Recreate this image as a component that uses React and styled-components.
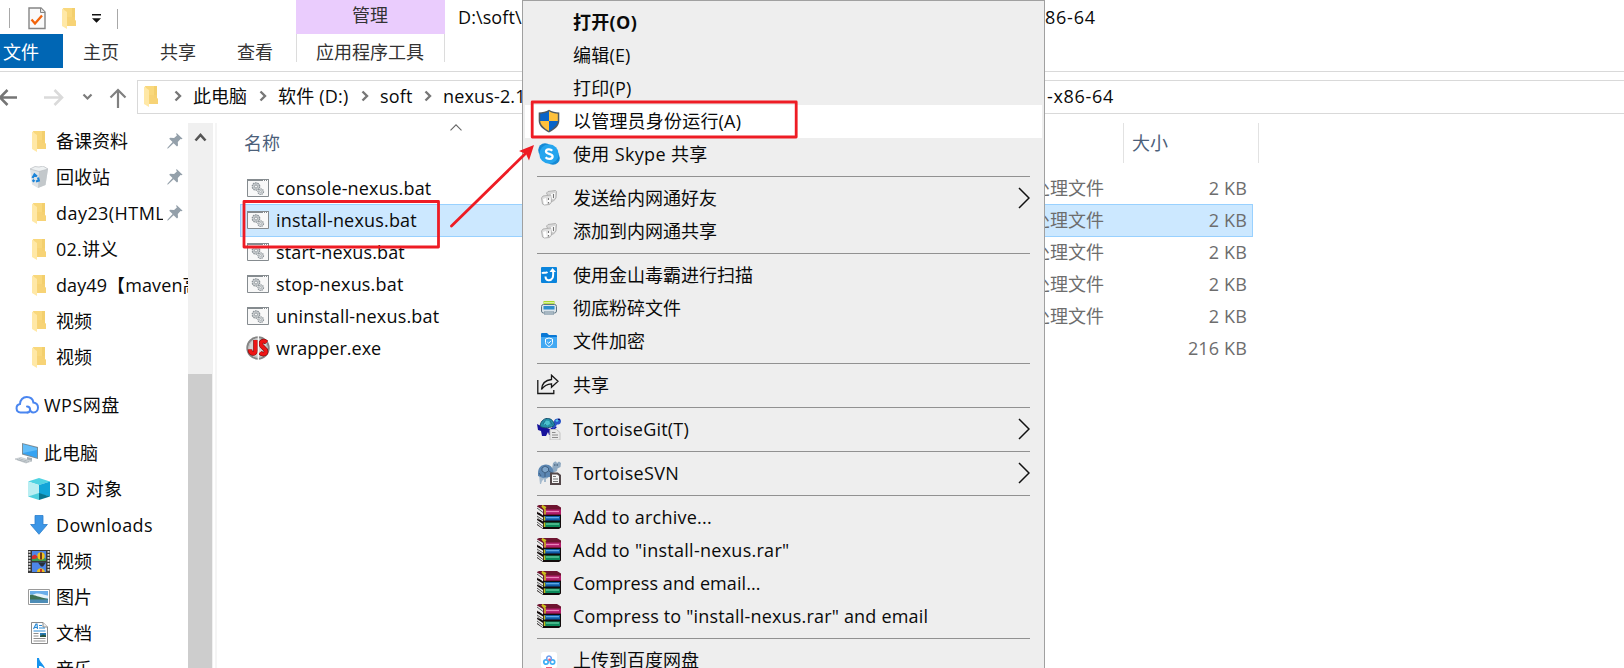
import React from "react";
import styled, { createGlobalStyle } from "styled-components";

const GlobalStyle = createGlobalStyle`
  html, body { margin: 0; padding: 0; background: #fff; overflow: hidden; }
  * { box-sizing: border-box; }
  svg { display: block; flex: none; }
`;

const Window = styled.div`
  position: relative;
  width: 1624px;
  height: 668px;
  overflow: hidden;
  display: flex;
  flex-direction: column;
  background: #fff;
  color: #0a0a0a;
  font-family: "Open Sans", "Noto Sans CJK SC", sans-serif;
  font-size: 18px;
  line-height: 24px;
  white-space: nowrap;
`;

const Label = styled.span`
  letter-spacing: ${(p) => p.$ls || 0}px;
  font-weight: ${(p) => (p.$bold ? 700 : 400)};
`;

/* ---------- title bar and ribbon ---------- */
const TitleBar = styled.header`
  display: flex;
  height: 34px;
`;
const QuickAccess = styled.div`
  display: flex;
  align-items: center;
  width: 296px;
  padding-left: 9px;
`;
const QuickDivider = styled.i`
  width: 1px;
  height: 20px;
  margin-top: 2px;
  background: #a8a8a8;
`;
const QuickIcon = styled.span`
  margin-left: ${(p) => p.$gap}px;
  padding-top: 2px;
`;
const ContextTab = styled.div`
  display: flex;
  justify-content: center;
  align-items: center;
  width: 149px;
  padding: 0 1px 5px 0;
  background: #eaccfd;
  color: #333;
`;
const TitleText = styled.div`
  width: 600px;
  padding: 5px 0 0 13px;
  letter-spacing: 0.1px;
`;
const TitleTail = styled.div`
  padding-top: 5px;
  letter-spacing: 0.75px;
`;
const Ribbon = styled.nav`
  display: flex;
  height: 38px;
  border-bottom: 1px solid #d9d9d9;
  color: #333;
`;
const Tab = styled.div`
  width: ${(p) => p.$w}px;
  height: 34px;
  padding: 6px 0 0 ${(p) => p.$pad}px;
  background: ${(p) => (p.$file ? "#0066b4" : "transparent")};
  color: ${(p) => (p.$file ? "#fff" : "#333")};
`;
const ToolTab = styled.div`
  width: 149px;
  height: 28px;
  padding: 6px 0 0 19px;
  border-left: 1px solid #dcdcdc;
  border-right: 1px solid #dcdcdc;
`;

/* ---------- address bar ---------- */
const AddressRow = styled.div`
  display: flex;
  height: 51px;
  padding-top: 8px;
`;
const NavButtons = styled.div`
  display: flex;
  width: 137px;
  height: 34px;
`;
const AddressBox = styled.div`
  display: flex;
  align-items: center;
  flex: 1;
  height: 34px;
  border: 1px solid #d9d9d9;
  border-right: 0;
  padding: 0 0 2px 6px;
`;
const Crumb = styled.span`
  flex: none;
  width: ${(p) => p.$w}px;
  padding-left: ${(p) => p.$pad || 0}px;
  letter-spacing: ${(p) => p.$ls || 0}px;
`;
const CrumbTail = styled.span`
  width: 482px;
  text-align: right;
  letter-spacing: 0.7px;
`;

/* ---------- body ---------- */
const Body = styled.div`
  display: flex;
  flex: 1;
  min-height: 0;
`;
const Sidebar = styled.aside`
  width: 188px;
  overflow: hidden;
`;
const SideItem = styled.div`
  display: flex;
  align-items: center;
  width: 188px;
  height: 36px;
  margin-top: ${(p) => p.$gap || 0}px;
  padding-left: ${(p) => (p.$root ? 14 : 26)}px;
`;
const SideIcon = styled.span`
  display: flex;
  justify-content: center;
  width: 26px;
`;
const SideLabel = styled.span`
  flex: 1;
  min-width: 0;
  overflow: hidden;
  margin-left: 4px;
`;
const PinSlot = styled.span`
  width: 25px;
  padding-left: 4px;
`;
const Scrollbar = styled.div`
  width: 25px;
  background: #f0f0f0;
`;
const ScrollUp = styled.div`
  display: flex;
  justify-content: center;
  height: 251px;
  padding-top: 9px;
`;
const ScrollThumb = styled.div`
  width: 24px;
  height: 294px;
  background: #cdcdcd;
`;
const Splitter = styled.div`
  width: 4px;
  border-right: 2px solid #f5f5f5;
`;
const FileList = styled.main`
  flex: 1;
  padding-left: 23px;
`;
const Columns = styled.div`
  display: flex;
  height: 49px;
  color: #4c607a;
`;
const Column = styled.div`
  width: ${(p) => p.$w}px;
  height: 40px;
  padding: 8px 0 0 ${(p) => p.$pad}px;
  border-right: 1px solid #e2e2e2;
  display: flex;
`;
const SortMark = styled.span`
  margin: -7px 0 0 170px;
`;
const FileRow = styled.div`
  display: flex;
  align-items: center;
  width: 1013px;
  height: ${(p) => (p.$selected ? 33 : 32)}px;
  margin-bottom: ${(p) => (p.$selected ? -1 : 0)}px;
  padding: 0 5px ${(p) => (p.$selected ? 1 : 0)}px 6px;
  border: 1px solid ${(p) => (p.$selected ? "#99d1ff" : "transparent")};
  background: ${(p) => (p.$selected ? "#cce8ff" : "transparent")};
`;
const FileIcon = styled.span`
  display: flex;
  justify-content: center;
  width: 22px;
  margin-right: 7px;
`;
const FileName = styled.span`
  width: 500px;
`;
const FileType = styled.span`
  width: 328px;
  text-align: right;
  color: #6d6d6d;
`;
const FileSize = styled.span`
  flex: 1;
  text-align: right;
  color: #6d6d6d;
`;

/* ---------- context menu ---------- */
const Menu = styled.div`
  position: absolute;
  left: 522px;
  top: 0;
  width: 523px;
  height: 690px;
  padding: 5px 2px;
  border: 1px solid #a0a0a0;
  background: #eee;
`;
const MenuItem = styled.div`
  display: flex;
  align-items: center;
  height: 33px;
  padding: 0 12px 2px 0;
  background: ${(p) => (p.$active ? "#fff" : "transparent")};
`;
const MenuIcon = styled.span`
  display: flex;
  justify-content: center;
  width: 48px;
`;
const MenuLabel = styled.span`
  flex: 1;
`;
const MenuRule = styled.hr`
  height: 1px;
  margin: 5px 12px;
  border: 0;
  background: #919191;
`;
const Annotations = styled.svg`
  position: absolute;
  left: 0;
  top: 0;
`;

/* ---------- icons ---------- */
const Folder = () => (
  <svg width="14" height="21" viewBox="0 0 14 21">
    <path d="M1 0h12v12l1 1v5H4z" fill="#f9d87c" />
    <path d="M10 0h3v12h-3z" fill="#f3cf6d" />
    <path d="M0 0.5l5 3.500v17L0 18z" fill="#ffe8a6" />
    <path d="M5 9l.4 9H14v-5l-1-1V9z" fill="#f6d273" opacity=".7" />
  </svg>
);
const Recycle = () => (
  <svg width="20" height="22" viewBox="0 0 20 22">
    <path d="M1 3l9 2 9-2-2.500 16-7.500 3-6-3.500z" fill="#dfe3e6" />
    <path d="M10 5l9-2-2.500 16-7.500 3z" fill="#c3c8cb" />
    <path d="M1 3l5-2.500 4 .5 4-1 5 3-9 2.500z" fill="#eef1f2" stroke="#b7bcc0" strokeWidth=".7" />
    <path d="M3.500 12l2-3.500 2.500 2M9 11.500l.8 3-2.800 1M5.500 15.500l-2-1.500" fill="none" stroke="#1c84d8" strokeWidth="2.200" />
  </svg>
);
const Pin = () => (
  <svg width="16" height="16" viewBox="0 0 16 16">
    <path d="M9.600 0l6 5.800-1.300.4-.8-.3-2.700 3 .2 3.700-1 1L6.600 10.300 1 15.600l-.8-.2.4-.9 5-5.500-3.400-3.200 1-1 3.900.2L9.900 2.400 9.200 1z" fill="#94a0aa" />
  </svg>
);
const Cloud = () => (
  <svg width="24" height="20" viewBox="0 0 24 20" fill="none" stroke="#4a86f0" strokeWidth="2" strokeLinecap="round">
    <path d="M12.500 17.500H5.500A4.300 4.300 0 0 1 5 9C5 5 8 2 11.700 2c3.500 0 6.200 2.300 6.700 5.500 2.600.4 4.600 2.500 4.600 5 0 2.800-2 5-4.700 5-1.800 0-3.300-1.400-3.300-3.200 0-1.700-1.200-2.800-3-2.800" />
    <path d="M12.500 17.500c1.500 0 2.500-1.200 2.500-3" />
  </svg>
);
const Computer = () => (
  <svg width="24" height="21" viewBox="0 0 24 21">
    <path d="M7 0l16 4v12L7 11.500z" fill="#7b8e99" />
    <path d="M8 1.300L22 5v9.700L8 10.600z" fill="#35a3f2" />
    <path d="M8 1.300L22 5v2L8 10z" fill="#63bdf8" />
    <path d="M12 14l5 1v3l-5-1z" fill="#a7b0b6" />
    <path d="M0 16l6-1.500 11 3.500-6 2z" fill="#dce1e4" stroke="#aeb6bb" strokeWidth=".6" />
    <path d="M2 16.500l10 2.800M4 15.700l10 2.800" stroke="#9aa3a9" strokeWidth=".7" />
  </svg>
);
const Cube = () => (
  <svg width="22" height="22" viewBox="0 0 22 22">
    <path d="M0 3.500L11 0l11 3.500L11 7z" fill="#4fd3e2" />
    <path d="M0 3.500L11 7v9L0 18.500z" fill="#b9eef2" />
    <path d="M22 3.500L11 7v9l11 2.500z" fill="#12a5d8" />
    <path d="M0 18.500L11 15v7z" fill="#4fcfdd" />
    <path d="M22 18.500L11 15v7z" fill="#087691" />
  </svg>
);
const Download = () => (
  <svg width="18" height="20" viewBox="0 0 18 20">
    <path d="M5 .5h8v9h4.400L9 19.300.6 9.500H5z" fill="#3c96e6" stroke="#2b7fcb" strokeWidth=".8" />
  </svg>
);
const Film = () => (
  <svg width="22" height="23" viewBox="0 0 22 23">
    <path d="M0 0h22v23H0z" fill="#3a3a3a" />
    <path d="M1.500 1v21M20.500 1v21" stroke="#ddd" strokeWidth="2" strokeDasharray="1.800 1.200" />
    <path d="M4 1h14v10H4zM4 12.500h14V22H4z" fill="#4d86e8" />
    <path d="M4 8l5-1 9 1.500V11H4z" fill="#3c9a50" />
    <circle cx="13" cy="6" r="3.700" fill="#f1c21c" />
    <path d="M12 2.500h2v7h-2z" fill="#6d3b1c" />
    <path d="M4 6l3-1.500L10 7 7 9H4z" fill="#d6322e" />
    <path d="M10 12.500h8l-3 4h-2z" fill="#27303c" />
    <path d="M9 22c0-5 7-5 8 0z" fill="#e8bd20" />
    <path d="M12 19h2v3h-2z" fill="#c5382d" />
  </svg>
);
const Picture = () => (
  <svg width="22" height="16" viewBox="0 0 22 16">
    <path d="M.5.500h21v15H.5z" fill="#fff" stroke="#9a9a9a" />
    <path d="M2 2h18v12H2z" fill="#9bcdf2" />
    <path d="M8 6h12V2H2v3z" fill="#6aaeea" />
    <path d="M5 6c4-3 9-1 15 1v2H2z" fill="#e5f2fa" />
    <path d="M2 6c3-1 7 2 18 4v1H2z" fill="#3f7256" />
    <path d="M2 10.500h18V14H2z" fill="#4d8cb6" />
  </svg>
);
const Doc = () => (
  <svg width="17" height="22" viewBox="0 0 17 22">
    <path d="M.5.500h11.500l4.500 4.500v16.500H.5z" fill="#fff" stroke="#8b8b8b" />
    <path d="M12 .5V5h4.500" fill="#ececec" stroke="#8b8b8b" />
    <path d="M2.500 7l2.500-5h1l.5 5M3.500 5.500h3M8 3.500h3M8 6h6M2.500 9h12" fill="none" stroke="#2c8bd6" strokeWidth="1.200" />
    <path d="M2.500 11.500h5M2.500 14h5M2.500 16.500h12M2.500 19h12" stroke="#8e8e8e" />
    <path d="M9 11h6v4H9z" fill="#2879b2" />
    <path d="M9 14l3-1.500 3 1V15H9z" fill="#285640" />
  </svg>
);
const Note = () => (
  <svg width="18" height="22" viewBox="0 0 18 22">
    <path d="M7 0h2c.5 5 7 7 6 13-1-4-3-5-6-5v10c0 4-8 5-8 1 0-3 3-4 6-3.500z" fill="#1593ee" />
  </svg>
);
const CheckDoc = () => (
  <svg width="18" height="23" viewBox="0 0 18 23">
    <path d="M1 1h12l4 4v16.500H1z" fill="#fafafa" stroke="#858585" strokeWidth="1.400" />
    <path d="M12.500 1v4.500H17" fill="#e5e5e5" stroke="#858585" />
    <path d="M3.500 12.500l3.500 4L14 8.500" fill="none" stroke="#f2640c" strokeWidth="2.300" />
  </svg>
);
const DropMark = () => (
  <svg width="9" height="9" viewBox="0 0 9 9">
    <path d="M0 0h9v1.600H0zM0 4.200h9L4.500 8.700z" fill="#111" />
  </svg>
);
const NavArrows = () => (
  <svg width="137" height="34" viewBox="0 0 137 34" fill="none" strokeWidth="2.600">
    <path d="M17 17.500H0M7.500 10L0 17.500 7.500 25" stroke="#757575" />
    <path d="M44 17.500h18M54.500 10l7.500 7.500-7.500 7.500" stroke="#dadada" />
    <path d="M83.500 14.500l4 4 4-4" stroke="#7c7c7c" strokeWidth="2.200" />
    <path d="M118 28V10M110.500 17.500l7.500-7.500 7.500 7.500" stroke="#808080" strokeWidth="2.200" />
  </svg>
);
const Chevron = () => (
  <svg width="8" height="12" viewBox="0 0 8 12">
    <path d="M1.500 1.500L6 6l-4.500 4.500" fill="none" stroke="#777" strokeWidth="2.400" />
  </svg>
);
const UpChevron = () => (
  <svg width="13" height="11" viewBox="0 0 13 11">
    <path d="M1.500 8.500l5-5.500 5 5.500" fill="none" stroke="#555" strokeWidth="2.600" />
  </svg>
);
const SortCaret = () => (
  <svg width="12" height="7" viewBox="0 0 12 7">
    <path d="M.5 6.300L6 .8l5.500 5.500" fill="none" stroke="#666" strokeWidth="1.100" />
  </svg>
);
const Bat = () => (
  <svg width="22" height="18" viewBox="0 0 22 18">
    <path d="M.5.500h21v17H.5z" fill="#f8f8f8" stroke="#858b8f" />
    <path d="M0 0h22v2H0z" fill="#858b8f" />
    <path d="M16 1.500h1M18 1.500h1M20 1.500h1" stroke="#fff" />
    <circle cx="9" cy="7.500" r="3.700" fill="#c9cdcf" stroke="#8c9398" strokeWidth="1.300" strokeDasharray="1.500 .8" />
    <circle cx="9" cy="7.500" r="1.500" fill="#f4f4f4" stroke="#8c9398" strokeWidth=".8" />
    <circle cx="13.700" cy="12.700" r="2.800" fill="#d7dadc" stroke="#8c9398" strokeWidth="1.200" strokeDasharray="1.300 .8" />
    <circle cx="13.700" cy="12.700" r="1" fill="#fff" stroke="#8c9398" strokeWidth=".6" />
  </svg>
);
const JsExe = () => (
  <svg width="24" height="24" viewBox="0 0 24 24">
    <circle cx="12" cy="12" r="10.700" fill="#f3f3f3" stroke="#858585" strokeWidth="2" />
    <circle cx="12" cy="12" r="9.300" fill="#d5d5d5" stroke="#b5b5b5" />
    <path d="M4 13.500c0 4.500 5.500 5.500 5.500 1V4M20.500 6.500C18 4 14.500 5 15 8.500c.3 3 5 3.500 5 7 0 3-4 3.500-6 1" fill="none" stroke="#7b1111" strokeWidth="4.600" />
    <path d="M4 13.500c0 4.500 5.500 5.500 5.500 1V4M20.500 6.500C18 4 14.500 5 15 8.500c.3 3 5 3.500 5 7 0 3-4 3.500-6 1" fill="none" stroke="#ee1515" strokeWidth="3.400" />
    <path d="M12.300 0v24" stroke="#fff" strokeWidth="1.200" />
  </svg>
);
const Shield = () => (
  <svg width="22" height="24" viewBox="0 0 22 24">
    <path d="M11 .7c3 2 6.500 2.500 10.300 2.800v8.500c0 5-5 9-10.300 11.500C5.700 21 .7 17 .7 12V3.500C4.500 3.200 8 2.700 11 .7z" fill="#505a60" />
    <path d="M11 2.200V12H2.200V4.700C5.500 4.400 8.500 3.700 11 2.200z" fill="#0864c8" />
    <path d="M11 2.200V12h8.800V4.700C16.500 4.400 13.500 3.700 11 2.200z" fill="#ffc13b" />
    <path d="M11 12H2.200c.3 4 4.300 7.500 8.800 9.900z" fill="#ffc13b" />
    <path d="M11 12h8.800c-.3 4-4.300 7.500-8.800 9.900z" fill="#0864c8" />
  </svg>
);
const Skype = () => (
  <svg width="22" height="22" viewBox="0 0 22 22">
    <circle cx="7" cy="7" r="6.800" fill="#1689d4" />
    <circle cx="15" cy="15" r="6.800" fill="#1689d4" />
    <circle cx="11" cy="11" r="9.700" fill="#25a5ee" />
    <path d="M14.200 7.700C12.500 5.700 8 5.900 8 8.500c0 3 6.600 1.800 6.600 5 0 2.900-5 3.200-7 .8" fill="none" stroke="#fff" strokeWidth="2.300" />
  </svg>
);
const Neiwang = () => (
  <svg width="16" height="16" viewBox="0 0 16 16">
    <path d="M5.500 3l1.500-1.500 7.500-1 1 1-.5 6.500-2.500 3-3 .5z" fill="#d8d8d8" stroke="#a5a5a5" strokeWidth=".8" />
    <path d="M.5 8l1.500-2 7.500-1 1.500 1.500-.5 5.500-2 2.500-5 .5L1.500 14z" fill="#dedede" stroke="#a5a5a5" strokeWidth=".8" />
    <path d="M10 4l4-1v5l-3 1zM2 9l3-1 1 6-3 .5zM6.500 8l3-.5v5l-3 1z" fill="#fff" />
    <path d="M12.500 4v4M7.500 8v2M7.500 12v1.500" stroke="#777" strokeWidth="1.200" />
  </svg>
);
const Scan = () => (
  <svg width="16" height="16" viewBox="0 0 16 16">
    <rect width="16" height="16" rx="1" fill="#0a84dc" />
    <path d="M1 6.500C2.500 4.500 4 7 6.500 5M4.500 9.500c0 4.500 5 5 7 1.500 1-2 .8-4.500.5-7.500" fill="none" stroke="#fff" strokeWidth="2" />
    <path d="M8.500 5l3-4L15 5z" fill="#fff" />
  </svg>
);
const Shredder = () => (
  <svg width="16" height="14" viewBox="0 0 16 14">
    <path d="M2.500 0h11v4h-11z" fill="#a9d82f" />
    <path d="M3 1.700h10" stroke="#e7f8b4" />
    <rect x=".5" y="3.500" width="15" height="8.500" rx="2" fill="#dce4ea" stroke="#5e7482" />
    <path d="M2.500 5h11v3.500h-11z" fill="#2d8dcc" />
    <path d="M3.500 10h9v4h-9z" fill="#f7f7f7" />
    <path d="M4 10v4M6 10v4M8 10v4M10 10v4M12 10v4" stroke="#57778c" />
  </svg>
);
const Encrypt = () => (
  <svg width="16" height="15" viewBox="0 0 16 15">
    <path d="M0 1q0-1 1-1h5l2 2h7q1 0 1 1v3H0z" fill="#0a78d5" />
    <path d="M0 4h16v11H0z" fill="#42a8f2" />
    <path d="M8 5l3.500 1v3.500c0 2-1.700 3.200-3.500 4-1.800-.8-3.500-2-3.500-4V6z" fill="none" stroke="#fff" />
    <path d="M6.300 9l1.400 1.300 2.300-2.500" fill="none" stroke="#fff" />
  </svg>
);
const Share = () => (
  <svg width="24" height="21" viewBox="0 0 24 21" fill="none" stroke="#171717" strokeWidth="1.300">
    <path d="M.8 6v13.500h16V16" />
    <path d="M4.500 15.500C5 9 9 6 14.500 5.500V1.200l6.500 6-6.500 6V9.800C10 10 7 11.500 4.500 15.500z" />
  </svg>
);
const GitTortoise = () => (
  <svg width="24" height="22" viewBox="0 0 24 22">
    <path d="M0 6l4 2 9 3 4-3 3 1-4 4-1 4h-3l-1-3-2 4H5l-1-5-3-1z" fill="#16119b" />
    <path d="M17 3.500C17 0 24-.5 24 3c0 3-2 3.500-4 3.500L17 11l-2-1z" fill="#2b55c9" />
    <path d="M18.500 3c0-2 3-2 3.500-.5L20 4z" fill="#4fc3ea" />
    <path d="M21 1.500h2" stroke="#10106a" strokeWidth="1.300" />
    <path d="M3 8C4 2 8 0 11.500.5 15 1 17 4 17.500 7 15 10 6 11 3 8z" fill="#2591a8" stroke="#174f6e" />
    <path d="M6.500 6l2-3.500 4 .5L13 6 9.500 8z" fill="#4cc3ce" />
    <path d="M8.500 2.500L6 6M13 3l2.500 4M9.500 8L8 6" stroke="#1d6380" strokeWidth=".8" />
    <path d="M13 11.500h6.500l3.500 3V22H13z" fill="#e9e9e9" stroke="#c3c3c3" />
    <path d="M15 14.500h3.500M15 17h6M15 19.500h6" stroke="#8b8b8b" strokeWidth="1.200" />
  </svg>
);
const SvnTortoise = () => (
  <svg width="24" height="24" viewBox="0 0 24 24">
    <path d="M16 2l2-1.500h1L20 2l2-1.500L24 2l-.5 4-3 1.500L20 10l-4 2-1-4z" fill="#8fa9c1" />
    <path d="M17 4h5" stroke="#536d88" strokeWidth="1.500" strokeDasharray="1.500 1" />
    <path d="M2 14h9v3l-2 1v3H7v-3l-2 2-1 3H3z" fill="#a5bacd" />
    <path d="M1 12C1 7 4 3.500 9 3.500c4 0 7 3 7.500 7.500L13 16l-7 1-5-2z" fill="#5b86b2" />
    <path d="M5 7l3-2 3.500 2v3L8 12l-3-2zM2 12l2 3M12 10l3 2M8 12v4" fill="#7fa6cb" stroke="#3e5f82" />
    <path d="M14 12.500h6.500l2.500 2V23h-9z" fill="#f5f5f5" stroke="#54484a" strokeWidth="2" />
    <path d="M16 15.500h3M16 18h5M16 20.500h5" stroke="#777" />
  </svg>
);
const Rar = () => (
  <svg width="24" height="24" viewBox="0 0 24 24">
    <path d="M0 14l6 1h18v7.500L22 24H6L0 20z" fill="#120b0b" />
    <path d="M0 7l6 2h18v7H6L0 13z" fill="#120b0b" />
    <path d="M0 1l2-1h18l4 2.500v7H6L0 6z" fill="#6e1430" />
    <path d="M0 1.500l6 3.500v5.500L0 6z" fill="#efefef" />
    <path d="M0 9l6 3.500v4L0 12.500z" fill="#efefef" />
    <path d="M0 15l6 4v4.500L0 19z" fill="#efefef" />
    <path d="M0 3l6 4.500M0 11l6 4M0 17l6 4.500" stroke="#444" strokeWidth=".9" />
    <path d="M7 4.500h17V9.500H7z" fill="#b01c68" />
    <path d="M9 6.500h13" stroke="#ea83bb" strokeWidth="1.300" />
    <path d="M7 11h16v4.500H7z" fill="#0e5ba6" />
    <path d="M9 12.700h13" stroke="#69b4ec" strokeWidth="1.200" />
    <path d="M7 17.500h16v4.500H7z" fill="#0c8a5b" />
    <path d="M9 19h13" stroke="#66d0a4" strokeWidth="1.300" />
    <path d="M5 1l3 3.500v5M7.500 11.500v4M7.500 17.500v4.500" fill="none" stroke="#c9bf1d" strokeWidth="1.500" />
    <path d="M5 .8l4 2" stroke="#c9bf1d" strokeWidth="2" />
  </svg>
);
const Baidu = () => (
  <svg width="16" height="16" viewBox="0 0 16 16">
    <rect width="16" height="16" rx="2.500" fill="#fff" />
    <circle cx="5" cy="10" r="2.200" fill="none" stroke="#3fb0f5" strokeWidth="1.700" />
    <circle cx="11.500" cy="10" r="2.200" fill="none" stroke="#3fb0f5" strokeWidth="1.700" />
    <path d="M6 7.500a2.300 2.300 0 1 1 4 0L8.500 9.500" fill="none" stroke="#6c9df0" strokeWidth="1.600" />
    <circle cx="8.500" cy="7.800" r="1.300" fill="#ef5c73" />
    <path d="M5 15.500h6" stroke="#ef5c73" />
  </svg>
);
const SubArrow = () => (
  <svg width="12" height="22" viewBox="0 0 12 22">
    <path d="M1 1l10 10L1 21" fill="none" stroke="#111" strokeWidth="1.500" />
  </svg>
);

const sideItems = [
  { icon: Folder, text: "备课资料", pin: true },
  { icon: Recycle, text: "回收站", pin: true },
  { icon: Folder, text: "day23(HTML", pin: true, ls: 0.45 },
  { icon: Folder, text: "02.讲义", ls: 0.2 },
  { icon: Folder, text: "day49【maven高级】", ls: 0.1 },
  { icon: Folder, text: "视频" },
  { icon: Folder, text: "视频" },
  { icon: Cloud, text: "WPS网盘", root: true, gap: 12, ls: 0.5 },
  { icon: Computer, text: "此电脑", root: true, gap: 12 },
  { icon: Cube, text: "3D 对象", ls: 0.55 },
  { icon: Download, text: "Downloads", ls: 0.33 },
  { icon: Film, text: "视频" },
  { icon: Picture, text: "图片" },
  { icon: Doc, text: "文档" },
  { icon: Note, text: "音乐" },
];

const files = [
  { name: "console-nexus.bat", size: "2 KB", ls: 0.16 },
  { name: "install-nexus.bat", size: "2 KB", ls: 0.18 },
  { name: "start-nexus.bat", size: "2 KB", ls: 0.13 },
  { name: "stop-nexus.bat", size: "2 KB", ls: 0.18 },
  { name: "uninstall-nexus.bat", size: "2 KB", ls: 0.18 },
  { name: "wrapper.exe", size: "216 KB" },
];

const menuItems = [
  { text: "打开(O)", bold: true, ls: 0.3 },
  { text: "编辑(E)", ls: 0.2 },
  { text: "打印(P)", ls: 0.2 },
  { text: "以管理员身份运行(A)", icon: Shield, active: true, ls: 0.2 },
  { text: "使用 Skype 共享", icon: Skype, ls: 0.35 },
  null,
  { text: "发送给内网通好友", icon: Neiwang, sub: true },
  { text: "添加到内网通共享", icon: Neiwang },
  null,
  { text: "使用金山毒霸进行扫描", icon: Scan },
  { text: "彻底粉碎文件", icon: Shredder },
  { text: "文件加密", icon: Encrypt },
  null,
  { text: "共享", icon: Share },
  null,
  { text: "TortoiseGit(T)", icon: GitTortoise, sub: true, ls: 0.2 },
  null,
  { text: "TortoiseSVN", icon: SvnTortoise, sub: true, ls: 0.3 },
  null,
  { text: "Add to archive...", icon: Rar, ls: 0.24 },
  { text: 'Add to "install-nexus.rar"', icon: Rar, ls: 0.27 },
  { text: "Compress and email...", icon: Rar, ls: 0.08 },
  { text: 'Compress to "install-nexus.rar" and email', icon: Rar, ls: 0.18 },
  null,
  { text: "上传到百度网盘", icon: Baidu },
];

export default function App() {
  return (
    <Window>
      <GlobalStyle />
      <TitleBar>
        <QuickAccess>
          <QuickDivider />
          <QuickIcon $gap={18}><CheckDoc /></QuickIcon>
          <QuickIcon $gap={16}><Folder /></QuickIcon>
          <QuickIcon $gap={16}><DropMark /></QuickIcon>
          <QuickIcon $gap={16}><QuickDivider as="div" /></QuickIcon>
        </QuickAccess>
        <ContextTab>管理</ContextTab>
        <TitleText>D:\soft\</TitleText>
        <TitleTail>86-64</TitleTail>
      </TitleBar>
      <Ribbon>
        <Tab $file $w={63} $pad={3}>文件</Tab>
        <Tab $w={77} $pad={20}>主页</Tab>
        <Tab $w={76} $pad={20}>共享</Tab>
        <Tab $w={80} $pad={21}>查看</Tab>
        <ToolTab>应用程序工具</ToolTab>
      </Ribbon>
      <AddressRow>
        <NavButtons><NavArrows /></NavButtons>
        <AddressBox>
          <Crumb $w={30}><Folder /></Crumb>
          <Chevron />
          <Crumb $w={77} $pad={11}>此电脑</Crumb>
          <Chevron />
          <Crumb $w={94} $pad={11} $ls={0.2}>软件 (D:)</Crumb>
          <Chevron />
          <Crumb $w={55} $pad={11} $ls={0.2}>soft</Crumb>
          <Chevron />
          <Crumb $w={200} $pad={11} $ls={0.15}>nexus-2.1</Crumb>
          <CrumbTail>-x86-64</CrumbTail>
        </AddressBox>
      </AddressRow>
      <Body>
        <Sidebar>
          {sideItems.map(({ icon: Icon, text, pin, root, gap, ls }, i) => (
            <SideItem key={i} $root={root} $gap={gap}>
              <SideIcon><Icon /></SideIcon>
              <SideLabel><Label $ls={ls}>{text}</Label></SideLabel>
              {pin && <PinSlot><Pin /></PinSlot>}
            </SideItem>
          ))}
        </Sidebar>
        <Scrollbar>
          <ScrollUp><UpChevron /></ScrollUp>
          <ScrollThumb />
        </Scrollbar>
        <Splitter />
        <FileList>
          <Columns>
            <Column $w={884} $pad={4}>名称<SortMark><SortCaret /></SortMark></Column>
            <Column $w={135} $pad={8}>大小</Column>
          </Columns>
          {files.map(({ name, size, ls }, i) => (
            <FileRow key={name} $selected={i === 1}>
              <FileIcon>{i === 5 ? <JsExe /> : <Bat />}</FileIcon>
              <FileName><Label $ls={ls}>{name}</Label></FileName>
              <FileType>{i < 5 ? "批处理文件" : ""}</FileType>
              <FileSize><Label $ls={0.15}>{size}</Label></FileSize>
            </FileRow>
          ))}
        </FileList>
      </Body>
      <Menu>
        {menuItems.map((item, i) => {
          if (!item) return <MenuRule key={i} />;
          const Icon = item.icon;
          return (
            <MenuItem key={i} $active={item.active}>
              <MenuIcon>{Icon && <Icon />}</MenuIcon>
              <MenuLabel><Label $bold={item.bold} $ls={item.ls}>{item.text}</Label></MenuLabel>
              {item.sub && <SubArrow />}
            </MenuItem>
          );
        })}
      </Menu>
      <Annotations width="1624" height="668" viewBox="0 0 1624 668" fill="none" stroke="#ee1c24">
        <rect x="244" y="201.500" width="194.500" height="45.500" strokeWidth="2.800" strokeLinejoin="round" />
        <rect x="532.200" y="102" width="264" height="35" strokeWidth="2.800" strokeLinejoin="round" />
        <path d="M451.500 226L525 154" strokeWidth="2.800" strokeLinecap="round" />
        <path d="M534 145l-5 15.500-3-6.500-7-3z" fill="#ee1c24" stroke="none" />
      </Annotations>
    </Window>
  );
}
